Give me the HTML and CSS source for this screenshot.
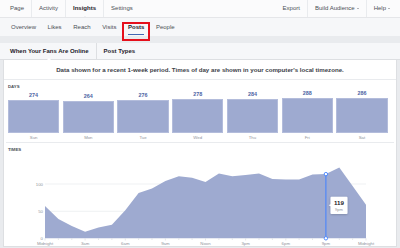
FILE: index.html
```html
<!DOCTYPE html>
<html>
<head>
<meta charset="utf-8">
<link rel="stylesheet" href="styles.css">
</head>
<body>
<header class="topbar">
  <nav class="topnav">
    <span class="tn">Page</span>
    <span class="tn">Activity</span>
    <span class="tn active">Insights</span>
    <span class="tn">Settings</span>
  </nav>
  <nav class="topnav">
    <span class="tn">Export</span>
    <span class="tn">Build Audience<i class="caret"></i></span>
    <span class="tn">Help<i class="caret"></i></span>
  </nav>
</header>
<nav class="subnav">
  <span class="sn">Overview</span>
  <span class="sn">Likes</span>
  <span class="sn">Reach</span>
  <span class="sn">Visits</span>
  <span class="sn current">Posts<span class="highlight"></span></span>
  <span class="sn">People</span>
</nav>
<nav class="tabs">
  <span class="tab selected">When Your Fans Are Online</span>
  <span class="tab">Post Types</span>
</nav>
<main class="card">
  <div class="notice">Data shown for a recent 1-week period. Times of day are shown in your computer's local timezone.</div>
  <section class="days">
    <div class="label">DAYS</div>
    <div class="bars">
      <div class="col"><span class="num">274</span><div class="bar" style="height:33.2px"></div></div>
      <div class="col"><span class="num">264</span><div class="bar" style="height:31.9px"></div></div>
      <div class="col"><span class="num">276</span><div class="bar" style="height:33.4px"></div></div>
      <div class="col"><span class="num">278</span><div class="bar" style="height:33.6px"></div></div>
      <div class="col"><span class="num">284</span><div class="bar" style="height:34.4px"></div></div>
      <div class="col"><span class="num">288</span><div class="bar" style="height:34.8px"></div></div>
      <div class="col"><span class="num">286</span><div class="bar" style="height:34.6px"></div></div>
    </div>
    <div class="daynames">
      <span>Sun</span><span>Mon</span><span>Tue</span><span>Wed</span><span>Thu</span><span>Fri</span><span>Sat</span>
    </div>
  </section>
  <section class="times">
    <div class="label">TIMES</div>
    <svg class="chart" width="392" height="93" viewBox="4 153 392 93">
      <defs>
        <filter id="sh" x="-30%" y="-30%" width="160%" height="160%">
          <feDropShadow dx="0" dy="0.5" stdDeviation="0.8" flood-color="#000" flood-opacity="0.25"/>
        </filter>
      </defs>
      <g class="grid">
        <line x1="45" y1="184" x2="366" y2="184"/>
        <line x1="45" y1="211.3" x2="366" y2="211.3"/>
      </g>
      <g class="ylab">
        <text x="43" y="185.8">100</text>
        <text x="43" y="213">50</text>
        <text x="43" y="240">0</text>
      </g>
      <polygon class="area" points="45,238.3 45,205.9 58.4,218.9 71.8,225.9 85.1,231.8 98.5,227.5 111.9,224.8 125.3,210.2 138.6,192.9 152,188.6 165.4,181.1 178.8,176.2 192.1,177.8 205.5,182.1 218.9,173.5 232.3,176.2 245.6,175.1 259,173.5 272.4,178.9 285.8,179.4 299.1,179.4 312.5,174.6 325.9,174.1 339.3,167.5 352.6,185.9 366,204.8 366,238.3"/>
      <g class="ticks">
        <line x1="45" y1="238.3" x2="45" y2="240.5"/>
        <line x1="58.4" y1="238.3" x2="58.4" y2="240"/>
        <line x1="71.8" y1="238.3" x2="71.8" y2="240"/>
        <line x1="85.1" y1="238.3" x2="85.1" y2="240.5"/>
        <line x1="98.5" y1="238.3" x2="98.5" y2="240"/>
        <line x1="111.9" y1="238.3" x2="111.9" y2="240"/>
        <line x1="125.3" y1="238.3" x2="125.3" y2="240.5"/>
        <line x1="138.6" y1="238.3" x2="138.6" y2="240"/>
        <line x1="152" y1="238.3" x2="152" y2="240"/>
        <line x1="165.4" y1="238.3" x2="165.4" y2="240.5"/>
        <line x1="178.8" y1="238.3" x2="178.8" y2="240"/>
        <line x1="192.1" y1="238.3" x2="192.1" y2="240"/>
        <line x1="205.5" y1="238.3" x2="205.5" y2="240.5"/>
        <line x1="218.9" y1="238.3" x2="218.9" y2="240"/>
        <line x1="232.3" y1="238.3" x2="232.3" y2="240"/>
        <line x1="245.6" y1="238.3" x2="245.6" y2="240.5"/>
        <line x1="259" y1="238.3" x2="259" y2="240"/>
        <line x1="272.4" y1="238.3" x2="272.4" y2="240"/>
        <line x1="285.8" y1="238.3" x2="285.8" y2="240.5"/>
        <line x1="299.1" y1="238.3" x2="299.1" y2="240"/>
        <line x1="312.5" y1="238.3" x2="312.5" y2="240"/>
        <line x1="325.9" y1="238.3" x2="325.9" y2="240.5"/>
        <line x1="339.3" y1="238.3" x2="339.3" y2="240"/>
        <line x1="352.6" y1="238.3" x2="352.6" y2="240"/>
        <line x1="366" y1="238.3" x2="366" y2="240.5"/>
      </g>
      <g class="xlab">
        <text x="45" y="245.3">Midnight</text>
        <text x="85.1" y="245.3">3am</text>
        <text x="125.3" y="245.3">6am</text>
        <text x="165.4" y="245.3">9am</text>
        <text x="205.5" y="245.3">Noon</text>
        <text x="245.6" y="245.3">3pm</text>
        <text x="285.8" y="245.3">6pm</text>
        <text x="325.9" y="245.3">9pm</text>
        <text x="366" y="245.3">Midnight</text>
      </g>
      <line class="hover" x1="325.9" y1="174.1" x2="325.9" y2="238.3"/>
      <circle class="dot" cx="325.9" cy="174.1" r="1.7"/>
      <circle class="dot" cx="325.9" cy="238.3" r="1.7"/>
      <g class="tip">
        <path class="tipbox" filter="url(#sh)" d="M331.5,196.8 H346.5 Q347.5,196.8 347.5,197.8 V213 Q347.5,214 346.5,214 H331.5 Q330.5,214 330.5,213 V206.3 L328.8,205.3 L330.5,204.3 V197.8 Q330.5,196.8 331.5,196.8 Z"/>
        <text class="tipval" x="339" y="205">119</text>
        <text class="tiptime" x="339" y="211.3">9pm</text>
      </g>
    </svg>
  </section>
</main>
</body>
</html>
```
FILE: styles.css
```css
* { box-sizing: border-box; }
html, body { margin: 0; padding: 0; }
body {
  width: 400px;
  height: 248px;
  overflow: hidden;
  background: #e9ebee;
  font-family: "Liberation Sans", Arial, sans-serif;
  color: #4b4f56;
}
.topbar {
  height: 18px;
  display: flex;
  justify-content: space-between;
  background: #fbfbfc;
  border-bottom: 1px solid #e5e6e9;
  padding: 0 3px;
}
.topnav { display: flex; }
.tn {
  position: relative;
  display: flex;
  align-items: center;
  padding: 0 7px 1px;
  font-size: 6px;
  color: #4b4f56;
  border-left: 1px solid #e9ebee;
}
.tn:first-child { border-left: 0; }
.tn.active { font-weight: bold; color: #1d2129; }
.tn.active::after {
  content: "";
  position: absolute;
  left: 50%;
  bottom: -1px;
  margin-left: -2px;
  border-left: 2px solid transparent;
  border-right: 2px solid transparent;
  border-bottom: 2px solid #e5e6e9;
}
.caret {
  display: inline-block;
  margin-left: 2px;
  margin-top: 1px;
  border-left: 1.2px solid transparent;
  border-right: 1.2px solid transparent;
  border-top: 1.5px solid #6b6f76;
}
.subnav {
  height: 18px;
  display: flex;
  gap: 11.6px;
  padding-left: 11px;
  background: #f6f7f9;
}
.sn {
  position: relative;
  display: flex;
  align-items: center;
  padding-bottom: 0;
  font-size: 6px;
  color: #4b4f56;
}
.sn.current { font-weight: bold; color: #1d2129; }
.sn.current::after {
  content: "";
  position: absolute;
  left: 0;
  right: 0;
  bottom: 1px;
  height: 1.5px;
  background: #4267b2;
}
.highlight {
  position: absolute;
  left: -6px;
  top: 4px;
  width: 28px;
  height: 19px;
  border: 2px solid #e5101c;
}
.tabs {
  position: relative;
  margin-top: 7px;
  height: 17px;
  display: flex;
  padding: 0 3px;
  background: #f6f7f9;
  border-bottom: 1px solid #dddfe2;
}
.tab {
  position: relative;
  display: flex;
  align-items: center;
  padding: 0 7px 1px;
  font-size: 6px;
  font-weight: bold;
  color: #1d2129;
  border-left: 1px solid #dddfe2;
}
.tab:first-child { border-left: 0; }
.tab.selected::after {
  content: "";
  position: absolute;
  left: 50%;
  bottom: -1px;
  margin-left: -2px;
  border-left: 2px solid transparent;
  border-right: 2px solid transparent;
  border-bottom: 2px solid #ffffff;
}
.card {
  margin: 0 3px;
  background: #fff;
  border-left: 1px solid #dddfe2;
  border-right: 1px solid #dddfe2;
  border-bottom: 1px solid #dddfe2;
}
.notice {
  height: 20px;
  line-height: 19px;
  text-align: center;
  font-size: 6.15px;
  font-weight: bold;
  color: #3d4148;
  border-bottom: 1px solid #e9ebee;
}
.label {
  height: 6px;
  line-height: 6px;
  font-size: 4.3px;
  font-weight: bold;
  color: #4b4f56;
  padding-left: 4px;
}
.days {
  padding: 4px 0 0 0;
  border-bottom: 1px solid #e9ebee;
  margin: 0 2px;
}
.days .label { padding-left: 2px; }
.bars {
  height: 43px;
  display: grid;
  grid-template-columns: repeat(7, 1fr);
  gap: 3.5px;
  padding: 0 6.5px 0 2px;
  align-items: end;
}
.col {
  display: flex;
  flex-direction: column;
  align-items: center;
}
.num {
  line-height: 7px;
  font-size: 5.4px;
  font-weight: bold;
  color: #4d64a3;
  margin-bottom: 1px;
}
.bar {
  width: 100%;
  background: #9eaad0;
  border: 1px solid #b3bcdb;
}
.daynames {
  height: 9px;
  display: grid;
  grid-template-columns: repeat(7, 1fr);
  gap: 3.5px;
  padding: 2px 6.5px 0 2px;
  line-height: 6px;
  font-size: 4.3px;
  color: #90949c;
  text-align: center;
}
.times { padding-top: 4px; }
.chart { display: block; }
.grid line { stroke: #ebedf0; stroke-width: 0.8; }
.area { fill: #9eaad0; }
.ticks line { stroke: #d5d8de; stroke-width: 0.6; }
.ylab text {
  font-family: "Liberation Sans", Arial, sans-serif;
  font-size: 4.3px;
  fill: #90949c;
  text-anchor: end;
}
.xlab text {
  font-family: "Liberation Sans", Arial, sans-serif;
  font-size: 4.3px;
  fill: #90949c;
  text-anchor: middle;
}
.hover { stroke: #4080ff; stroke-width: 1; }
.dot { fill: #fff; stroke: #4080ff; stroke-width: 0.9; }
.tipbox { fill: #fff; }
.tipval {
  font-family: "Liberation Sans", Arial, sans-serif;
  font-size: 6.2px;
  font-weight: bold;
  fill: #1d2129;
  text-anchor: middle;
}
.tiptime {
  font-family: "Liberation Sans", Arial, sans-serif;
  font-size: 4px;
  fill: #90949c;
  text-anchor: middle;
}
```
